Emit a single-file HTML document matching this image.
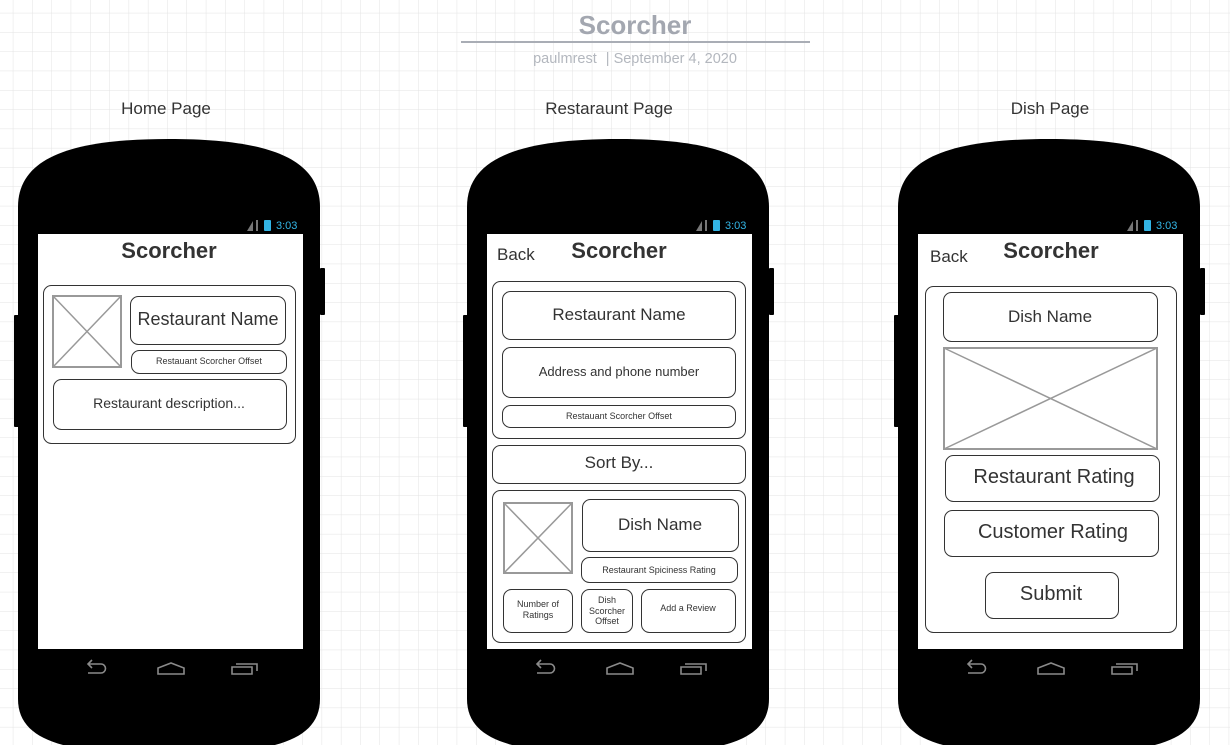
<!DOCTYPE html>
<html><head><meta charset="utf-8"><style>
html,body{margin:0;padding:0;width:1230px;height:745px;overflow:hidden;background:#fff}
svg{display:block}
text{font-family:"Liberation Sans",Arial,sans-serif;fill:#333}
</style></head><body>
<svg width="1230" height="745" viewBox="0 0 1230 745" xmlns="http://www.w3.org/2000/svg">
<defs>
<pattern id="g" width="19.3" height="19.3" patternUnits="userSpaceOnUse" x="-6" y="-6">
<path d="M19.3 0V19.3H0" fill="none" stroke="#e3e3e3" stroke-width="1"/>
</pattern>
<g id="phone">
<path d="M0 68C0 18 55 0 151 0C247 0 302 18 302 68V560C302 605 247 615 151 615C55 615 0 605 0 560Z" fill="#000"/>
<rect x="302" y="129" width="5" height="47" rx="1" fill="#000"/>
<rect x="-4" y="176" width="5" height="112" rx="1" fill="#000"/>
<rect x="20" y="95" width="265" height="415" fill="#fff"/>
<g fill="#33b5e5">
<path d="M235 82l-6 10h6z" fill="#777"/><rect x="238" y="81" width="2" height="11" fill="#777"/>
<rect x="246" y="81" width="7" height="11" rx="1"/>
<text x="258" y="90" font-size="11" style="fill:#33b5e5">3:03</text>
</g>
<g fill="none" stroke="#8a8a8a" stroke-width="1.6">
<path d="M70 525h13a4.5 4.5 0 0 1 0 9h-13M74 521l-4 4 4 4"/>
<path d="M140 535v-6l13-5 13 5v6z"/>
<path d="M214 528h20v7h-20zM218 525h21v7"/>
</g>
</g>
</defs>
<rect width="1230" height="745" fill="url(#g)"/>
<text x="635" y="34" font-size="26" font-weight="bold" text-anchor="middle" style="fill:#a3a7b0">Scorcher</text>
<rect x="461" y="41" width="349" height="2" fill="#a9adb5"/>
<text x="635" y="63" font-size="14.5" text-anchor="middle" style="fill:#b3b7be">paulmrest  <tspan dx="5">|  September 4, 2020</tspan></text>
<g font-size="17" text-anchor="middle">
<text x="166" y="114">Home Page</text>
<text x="609" y="114">Restaraunt Page</text>
<text x="1050" y="114">Dish Page</text>
</g>
<use href="#phone" x="18" y="139"/>
<use href="#phone" x="467" y="139"/>
<use href="#phone" x="898" y="139"/>
<g fill="none" stroke="#333" stroke-width="1">
<rect x="43.5" y="285.5" width="252" height="158" rx="8"/>
<rect x="130.5" y="296.5" width="155" height="48" rx="8"/>
<rect x="131.5" y="350.5" width="155" height="23" rx="8"/>
<rect x="53.5" y="379.5" width="233" height="50" rx="8"/>
<rect x="492.5" y="281.5" width="253" height="157" rx="8"/>
<rect x="502.5" y="291.5" width="233" height="48" rx="8"/>
<rect x="502.5" y="347.5" width="233" height="50" rx="8"/>
<rect x="502.5" y="405.5" width="233" height="22" rx="8"/>
<rect x="492.5" y="445.5" width="253" height="38" rx="8"/>
<rect x="492.5" y="490.5" width="253" height="152" rx="8"/>
<rect x="582.5" y="499.5" width="156" height="52" rx="8"/>
<rect x="581.5" y="557.5" width="156" height="25" rx="8"/>
<rect x="503.5" y="589.5" width="69" height="43" rx="8"/>
<rect x="581.5" y="589.5" width="51" height="43" rx="8"/>
<rect x="641.5" y="589.5" width="94" height="43" rx="8"/>
<rect x="925.5" y="286.5" width="251" height="346" rx="8"/>
<rect x="943.5" y="292.5" width="214" height="49" rx="8"/>
<rect x="945.5" y="455.5" width="214" height="46" rx="8"/>
<rect x="944.5" y="510.5" width="214" height="46" rx="8"/>
<rect x="985.5" y="572.5" width="133" height="46" rx="8"/>
</g>
<g fill="none" stroke="#999" stroke-width="2">
<rect x="53" y="296" width="68" height="71"/><path d="M53 296L121 367M121 296L53 367" stroke-width="1.5"/>
<rect x="504" y="503" width="68" height="70"/><path d="M504 503L572 573M572 503L504 573" stroke-width="1.5"/>
<rect x="944" y="348" width="213" height="101"/><path d="M944 348L1157 449M1157 348L944 449" stroke-width="1.5"/>
</g>
<g text-anchor="middle">
<text x="169" y="258" font-size="22" font-weight="bold">Scorcher</text>
<text x="619" y="258" font-size="22" font-weight="bold">Scorcher</text>
<text x="1051" y="258" font-size="22" font-weight="bold">Scorcher</text>
<text x="208" y="325" font-size="18">Restaurant Name</text>
<text x="209" y="364" font-size="9">Restauant Scorcher Offset</text>
<text x="169" y="408" font-size="14">Restaurant description...</text>
<text x="619" y="320" font-size="17">Restaurant Name</text>
<text x="619" y="376" font-size="13">Address and phone number</text>
<text x="619" y="419" font-size="9">Restauant Scorcher Offset</text>
<text x="619" y="468" font-size="17">Sort By...</text>
<text x="660" y="530" font-size="17">Dish Name</text>
<text x="659" y="573" font-size="9">Restaurant Spiciness Rating</text>
<text x="538" y="607" font-size="9">Number of</text>
<text x="538" y="618" font-size="9">Ratings</text>
<text x="607" y="603" font-size="9">Dish</text>
<text x="607" y="614" font-size="9">Scorcher</text>
<text x="607" y="624" font-size="9">Offset</text>
<text x="688" y="611" font-size="9">Add a Review</text>
<text x="1050" y="322" font-size="17">Dish Name</text>
<text x="1054" y="483" font-size="20">Restaurant Rating</text>
<text x="1053" y="538" font-size="20">Customer Rating</text>
<text x="1051" y="600" font-size="20">Submit</text>
</g>
<text x="497" y="260" font-size="17">Back</text>
<text x="930" y="262" font-size="17">Back</text>
</svg>
</body></html>
